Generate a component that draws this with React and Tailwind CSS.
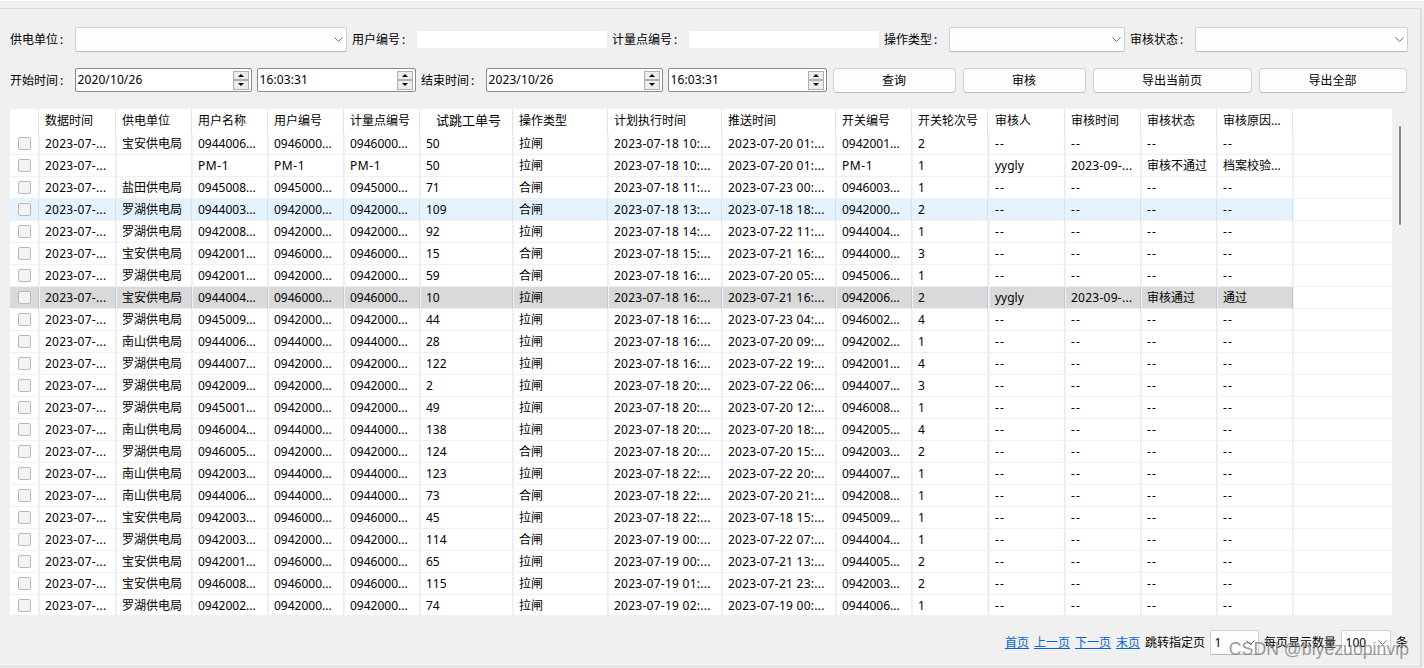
import { useState } from "react";
import { clsx } from "clsx";

const columns = [
  { title: "数据时间", width: "w-[77px]" },
  { title: "供电单位", width: "w-[76px]" },
  { title: "用户名称", width: "w-[76px]" },
  { title: "用户编号", width: "w-[76px]" },
  { title: "计量点编号", width: "w-[76px]" },
  { title: "试跳工单号", width: "w-[93px]", large: true },
  { title: "操作类型", width: "w-[95px]" },
  { title: "计划执行时间", width: "w-[114px]" },
  { title: "推送时间", width: "w-[114px]" },
  { title: "开关编号", width: "w-[76px]" },
  { title: "开关轮次号", width: "w-[76px]" },
  { title: "审核人", width: "w-[77px]", wide: true },
  { title: "审核时间", width: "w-[76px]" },
  { title: "审核状态", width: "w-[76px]" },
  { title: "审核原因...", width: "w-[76px]" },
];

const none = ["--", "--", "--", "--"];

// unit, user name, user no, meter no, order, action, planned, pushed, switch no, round, audit
const records = [
  ["宝安供电局", "0944006...", "0946000...", "0946000...", "50", "拉闸", "18 10", "20 01", "0942001...", "2", none],
  ["", "PM-1", "PM-1", "PM-1", "50", "拉闸", "18 10", "20 01", "PM-1", "1", ["yygly", "2023-09-...", "审核不通过", "档案校验..."]],
  ["盐田供电局", "0945008...", "0945000...", "0945000...", "71", "合闸", "18 11", "23 00", "0946003...", "1", none],
  ["罗湖供电局", "0944003...", "0942000...", "0942000...", "109", "合闸", "18 13", "18 18", "0942000...", "2", none],
  ["罗湖供电局", "0942008...", "0942000...", "0942000...", "92", "拉闸", "18 14", "22 11", "0944004...", "1", none],
  ["宝安供电局", "0942001...", "0946000...", "0946000...", "15", "合闸", "18 15", "21 16", "0944000...", "3", none],
  ["罗湖供电局", "0942001...", "0942000...", "0942000...", "59", "合闸", "18 16", "20 05", "0945006...", "1", none],
  ["宝安供电局", "0944004...", "0946000...", "0946000...", "10", "拉闸", "18 16", "21 16", "0942006...", "2", ["yygly", "2023-09-...", "审核通过", "通过"]],
  ["罗湖供电局", "0945009...", "0942000...", "0942000...", "44", "拉闸", "18 16", "23 04", "0946002...", "4", none],
  ["南山供电局", "0944006...", "0944000...", "0944000...", "28", "拉闸", "18 16", "20 09", "0942002...", "1", none],
  ["罗湖供电局", "0944007...", "0942000...", "0942000...", "122", "拉闸", "18 16", "22 19", "0942001...", "4", none],
  ["罗湖供电局", "0942009...", "0942000...", "0942000...", "2", "拉闸", "18 20", "22 06", "0944007...", "3", none],
  ["罗湖供电局", "0945001...", "0942000...", "0942000...", "49", "拉闸", "18 20", "20 12", "0946008...", "1", none],
  ["南山供电局", "0946004...", "0944000...", "0944000...", "138", "拉闸", "18 20", "20 18", "0942005...", "4", none],
  ["罗湖供电局", "0946005...", "0942000...", "0942000...", "124", "合闸", "18 20", "20 15", "0942003...", "2", none],
  ["南山供电局", "0942003...", "0944000...", "0944000...", "123", "拉闸", "18 22", "22 20", "0944007...", "1", none],
  ["南山供电局", "0944006...", "0944000...", "0944000...", "73", "合闸", "18 22", "20 21", "0942008...", "1", none],
  ["宝安供电局", "0942003...", "0946000...", "0946000...", "45", "拉闸", "18 22", "18 15", "0945009...", "1", none],
  ["罗湖供电局", "0942003...", "0942000...", "0942000...", "114", "合闸", "19 00", "22 07", "0944004...", "1", none],
  ["宝安供电局", "0942001...", "0946000...", "0946000...", "65", "拉闸", "19 00", "21 13", "0944005...", "2", none],
  ["宝安供电局", "0946008...", "0946000...", "0946000...", "115", "拉闸", "19 01", "21 23", "0942003...", "2", none],
  ["罗湖供电局", "0942002...", "0942000...", "0942000...", "74", "拉闸", "19 02", "19 00", "0944006...", "1", none],
];

const rows = records.map(([unit, name, user, meter, order, action, plan, push, sw, round, audit]) => [
  "2023-07-...", unit, name, user, meter, order, action,
  `2023-07-${plan}:...`, `2023-07-${push}:...`, sw, round, ...audit,
]);

const hovered = 3;

function tracking(text) {
  if (text === "--") return "tracking-[1.2px]";
  if (text.startsWith("PM")) return "tracking-[0.6px]";
  return text.includes("-") ? "tracking-[0.26px]" : "";
}

function Chevron() {
  return (
    <svg width="9" height="5" viewBox="0 0 9 5" fill="none" stroke="#6b6b6b" className="shrink-0">
      <path d="M0.5 0.5L4.5 4.4L8.5 0.5" />
    </svg>
  );
}

function Combo({ width, value = "" }) {
  return (
    <button className={clsx("flex h-[25px] shrink-0 items-center justify-between rounded-[2px] border border-[#d0d0d0] border-b-[#b8b8b8] bg-[#fdfdfd] pr-[3px] pl-[3.5px]", width)}>
      <span>{value}</span>
      <Chevron />
    </button>
  );
}

function Label({ width, children }) {
  return (
    <label className={clsx("flex shrink-0 whitespace-nowrap", width)}>
      {children}
      <span className="ml-0.5">:</span>
    </label>
  );
}

function Spin({ width, value }) {
  return (
    <div className={clsx("flex h-6 shrink-0 items-center justify-between rounded-[2px] border border-[#8a8a8a] bg-white pr-0.5 pl-[1.5px]", width)}>
      <span className="tracking-[0.1px]">{value}</span>
      <span className="flex h-[19px] w-4 flex-col">
        {["M3 0L6 3H0Z", "M0 0H6L3 3Z"].map((d) => (
          <button key={d} className="flex flex-1 items-center justify-center border border-[#b0b0b0] bg-[#ececec]">
            <svg width="6" height="3" viewBox="0 0 6 3"><path d={d} fill="#000" /></svg>
          </button>
        ))}
      </span>
    </div>
  );
}

function PushButton({ width, children }) {
  return (
    <button className={clsx("h-[25px] shrink-0 rounded-[4px] border border-[#d0d0d0] border-b-[#bcbcbc] bg-[#fdfdfd] pr-px", width)}>
      {children}
    </button>
  );
}

function Filters() {
  return (
    <div className="flex flex-col gap-4">
      <div className="flex h-[25px] items-center gap-[5px]">
        <div className="flex items-center"><Label width="w-[65px] pt-px">供电单位</Label><Combo width="w-[272px]" /></div>
        <div className="flex items-center"><Label width="w-[65px] pt-px">用户编号</Label><input className="h-[17px] w-[190px] bg-white" /></div>
        <div className="flex items-center"><Label width="w-[77px] pt-px">计量点编号</Label><input className="h-[17px] w-[190px] bg-white" /></div>
        <div className="flex items-center"><Label width="w-[65px] pt-px">操作类型</Label><Combo width="w-[176px]" /></div>
        <div className="flex items-center"><Label width="w-[65px] pt-px">审核状态</Label><Combo width="w-[213px]" /></div>
      </div>
      <div className="flex h-[25px] items-start">
        <div className="flex gap-[5px]">
          <div className="flex"><Label width="w-[65px] leading-[26px]">开始时间</Label><Spin width="w-[177px]" value="2020/10/26" /></div>
          <Spin width="w-[159px]" value="16:03:31" />
          <div className="flex"><Label width="w-[65px] leading-[26px]">结束时间</Label><Spin width="w-[177px]" value="2023/10/26" /></div>
          <Spin width="w-[159px]" value="16:03:31" />
        </div>
        <div className="ml-1.5 flex gap-[7px]">
          <PushButton width="w-[123px]">查询</PushButton>
          <PushButton width="w-[123px]">审核</PushButton>
          <PushButton width="w-[159px]">导出当前页</PushButton>
          <PushButton width="w-[148px]">导出全部</PushButton>
        </div>
      </div>
    </div>
  );
}

function Row({ cells, index, selected, onSelect }) {
  const tone = index === hovered ? "bg-[#e5f3ff]" : selected ? "bg-[#d9d9d9]" : "bg-white";
  const line = index === hovered ? "border-r-[#cce4f9]" : selected ? "border-r-[#bfc8d0]" : "border-r-[#e9edf4]";
  return (
    <div className="flex h-[22px] shrink-0" onClick={onSelect}>
      <div className={clsx("flex w-[29px] shrink-0 items-center justify-center border-r border-b border-b-[#f0f0f0]", tone, line)}>
        <span className="size-[13px] rounded-[2px] border border-[#b8b8b8] bg-[#f3f3f3]" />
      </div>
      {cells.map((cell, i) => (
        <div
          key={i}
          className={clsx(
            "shrink-0 overflow-hidden border-r border-b border-b-[#f0f0f0] border-l-[#edf2fa] pl-[5px] leading-[21px] whitespace-nowrap",
            columns[i].width,
            columns[i].wide ? "border-l-2" : "border-l",
            tracking(cell),
            tone,
            line
          )}
        >
          {cell}
        </div>
      ))}
      <div className="flex-1 border-b border-l border-b-[#f0f0f0] border-l-[#edf2fa]" />
    </div>
  );
}

function Table() {
  const [current, setCurrent] = useState(7);
  return (
    <div className="flex h-[506px] w-[1382px] flex-col overflow-hidden bg-white">
      <div className="flex h-6 shrink-0">
        <div className="w-[29px] shrink-0 border-r border-[#e2e2e2]" />
        {columns.map((col) => (
          <div
            key={col.title}
            className={clsx(
              "shrink-0 border-r border-[#e2e2e2] whitespace-nowrap",
              col.width,
              col.large ? "pl-4 text-[13px] leading-[22px]" : "leading-6",
              !col.large && (col.wide ? "pl-[7px]" : "pl-1.5")
            )}
          >
            {col.title}
          </div>
        ))}
      </div>
      {rows.map((cells, i) => (
        <Row key={i} cells={cells} index={i} selected={i === current} onSelect={() => setCurrent(i)} />
      ))}
    </div>
  );
}

function Pager() {
  return (
    <div className="mt-[15px] flex h-[25px] items-center gap-[5px] pl-[995px] whitespace-nowrap">
      {["首页", "上一页", "下一页", "末页"].map((text) => (
        <a key={text} href="#" className="text-[#0066cc] underline">{text}</a>
      ))}
      <span>跳转指定页</span>
      <Combo width="w-[49px]" value="1" />
      <span>每页显示数量</span>
      <Combo width="w-[50px]" value="100" />
      <span>条</span>
    </div>
  );
}

export default function App() {
  return (
    <div lang="zh-CN" className="relative h-[668px] w-[1424px] overflow-hidden border-t border-white bg-[#f0f0f0] pt-[7px] font-['Noto_Sans','Noto_Sans_CJK_SC',sans-serif] text-[12px] leading-4 text-black">
      <div className="h-[659px] w-[1422px] border-t border-r-2 border-b border-[#dcdcdc] pt-[18px] pl-[10px]">
        <Filters />
        <div className="mt-4 flex gap-[7px]">
          <Table />
          <div className="mt-[17px] h-[99px] w-0.5 rounded-full bg-[#868686]" />
        </div>
        <Pager />
      </div>
      <div className="pointer-events-none absolute right-[15px] bottom-[7px] font-['Liberation_Sans',sans-serif] text-[17.7px] leading-6 whitespace-nowrap text-[#777777]/75">
        CSDN @biyezuopinvip
      </div>
    </div>
  );
}
